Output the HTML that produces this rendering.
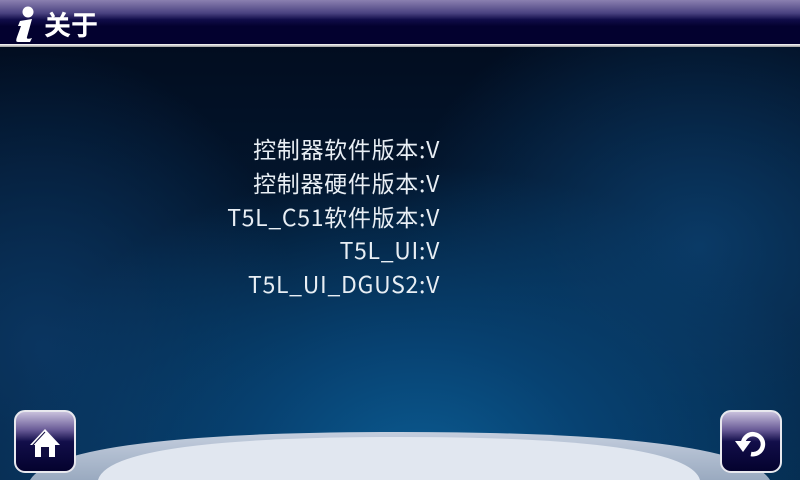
<!DOCTYPE html>
<html><head><meta charset="utf-8"><style>
*{margin:0;padding:0}
html,body{width:800px;height:480px;overflow:hidden}
body{position:relative;background:#03142a;font-family:"Liberation Sans","Noto Sans CJK SC",sans-serif}
#bg{position:absolute;left:0;top:46px;width:800px;height:434px;
background:radial-gradient(ellipse 420px 300px at 420px 420px,#0b5a90 0%,#074272 40%,rgba(4,30,60,0) 100%),
radial-gradient(ellipse 300px 260px at 700px 200px,#0a3a66 0%,rgba(0,0,0,0) 100%),
radial-gradient(ellipse 260px 300px at 40px 300px,#0a3560 0%,rgba(0,0,0,0) 100%),
linear-gradient(180deg,#020d20 0%,#03172f 40%,#052a4c 100%)}
#hdr{position:absolute;left:0;top:0;width:800px;height:44px;background:linear-gradient(180deg,#8b80b0 0%,#4a4280 30%,#100c48 45%,#03012f 60%,#03012f 100%)}
#line{position:absolute;left:0;top:44px;width:800px;height:3px;background:linear-gradient(180deg,#ffffff,#9a9a9a)}
#title{position:absolute;left:44px;top:6px;color:#fff;font-size:27px;font-weight:bold;line-height:36px;font-family:"Noto Sans CJK SC",sans-serif}
#txt{position:absolute;right:360px;top:132px;text-align:right;color:#e8eef4;font-size:23px;line-height:33.8px;font-family:"Noto Sans CJK SC",sans-serif;letter-spacing:0.7px}
.btn{position:absolute;top:410px;width:58px;height:59px;border:2px solid #e8e8ee;border-radius:11px;background:linear-gradient(180deg,#c8c0dc 0%,#6a5c98 30%,#120e4a 50%,#04022e 100%)}
</style></head><body>
<div id="bg"></div>
<svg style="position:absolute;left:0;top:0" width="800" height="480" viewBox="0 0 800 480">
<defs><linearGradient id="g1" x1="0" y1="0" x2="0" y2="1"><stop offset="0" stop-color="#c4cede"/><stop offset="1" stop-color="#9aaac0"/></linearGradient></defs>
<path d="M30 480 Q60 432 400 432 Q740 432 770 480 Z" fill="url(#g1)"/>
<path d="M98 480 Q110 437 399 437 Q688 437 700 480 Z" fill="#e1e7f0"/>
</svg>
<div id="hdr"></div><div id="line"></div>
<svg style="position:absolute;left:12px;top:4px" width="28" height="40" viewBox="0 0 28 40">
<circle cx="16" cy="8" r="5.5" fill="#fff"/>
<path d="M8 17 L20 15 L15 33 Q14 36 20 34 L18 38 L6 38 Q3 38 5 33 L9 22 L6 22 Z" fill="#fff"/>
</svg>
<div id="title">关于</div>
<div id="txt">控制器软件版本:V<br>控制器硬件版本:V<br>T5L_C51软件版本:V<br>T5L_UI:V<br>T5L_UI_DGUS2:V</div>
<div class="btn" style="left:14px">
<svg width="58" height="59" viewBox="0 0 58 59"><path d="M29 17 L14 33 L19 33 L19 45 L39 45 L39 33 L44 33 Z" fill="#fff"/><rect x="25" y="35" width="8" height="10" fill="#100c40"/><path d="M29 20 L16 34" stroke="#100c40" stroke-width="1"/></svg>
</div>
<div class="btn" style="left:720px">
<svg width="58" height="59" viewBox="0 0 58 59"><path d="M21 31 A10 10 0 1 1 29 42" fill="none" stroke="#fff" stroke-width="4.5"/><path d="M13 29 L29 29 L21 40 Z" fill="#fff"/></svg>
</div>
</body></html>
